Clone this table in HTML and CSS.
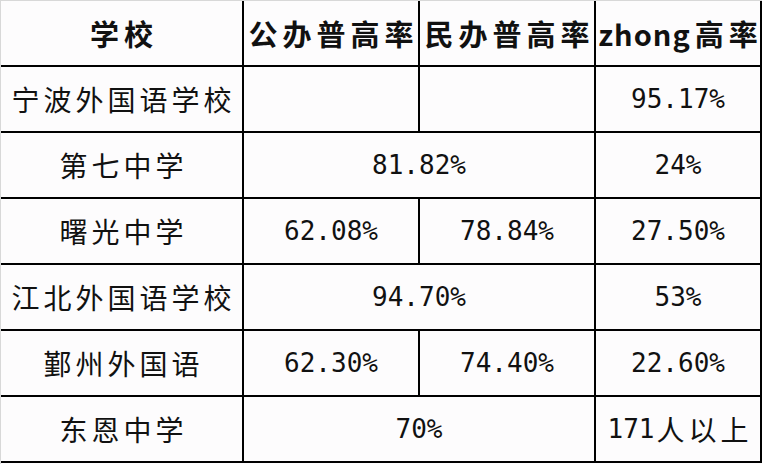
FILE: index.html
```html
<!DOCTYPE html>
<html lang="zh">
<head>
<meta charset="utf-8">
<title>学校普高率</title>
<link rel="stylesheet" href="styles.css">
</head>
<body>
<div class="sheet">
  <div class="cell head">学校</div>
  <div class="cell head">公办普高率</div>
  <div class="cell head">民办普高率</div>
  <div class="cell head"><span class="latin">zhong</span>高率</div>

  <div class="cell name">宁波外国语学校</div>
  <div class="cell"></div>
  <div class="cell"></div>
  <div class="cell num">95.17%</div>

  <div class="cell name">第七中学</div>
  <div class="cell num span2">81.82%</div>
  <div class="cell num">24%</div>

  <div class="cell name">曙光中学</div>
  <div class="cell num">62.08%</div>
  <div class="cell num">78.84%</div>
  <div class="cell num">27.50%</div>

  <div class="cell name">江北外国语学校</div>
  <div class="cell num span2">94.70%</div>
  <div class="cell num">53%</div>

  <div class="cell name">鄞州外国语</div>
  <div class="cell num">62.30%</div>
  <div class="cell num">74.40%</div>
  <div class="cell num">22.60%</div>

  <div class="cell name">东恩中学</div>
  <div class="cell num span2">70%</div>
  <div class="cell name"><span class="digits">171</span>人以上</div>
</div>
</body>
</html>
```

FILE: styles.css
```css
html, body {
  margin: 0;
  padding: 0;
  background: #fdfcfd;
}

.sheet {
  width: 762px;
  height: 464px;
  box-sizing: border-box;
  border-top: 1px solid #d8d8d8;
  border-left: 1px solid #d8d8d8;
  display: grid;
  grid-template-columns: 243px 176px 176px 166px;
  grid-template-rows: 66px repeat(6, 66px);
  background: #fdfcfd;
  color: #111;
}

.cell {
  box-sizing: border-box;
  border-right: 2px solid #000;
  border-bottom: 2px solid #000;
  display: flex;
  align-items: center;
  justify-content: center;
  white-space: nowrap;
  font-family: "Noto Sans CJK SC", "Noto Sans", sans-serif;
}

.head {
  font-size: 29px;
  font-weight: 700;
  letter-spacing: 5px;
  padding-left: 5px;
}

.head .latin {
  letter-spacing: 1px;
  margin-right: 4px;
}

.name {
  font-size: 28px;
  font-weight: 400;
  letter-spacing: 4px;
  padding-left: 4px;
}

.num {
  font-family: "DejaVu Sans Mono", "Liberation Mono", monospace;
  font-size: 26px;
  letter-spacing: 0;
}

.digits {
  font-family: "DejaVu Sans Mono", "Liberation Mono", monospace;
  font-size: 26px;
  letter-spacing: 0;
  margin-right: 2px;
}

.span2 {
  grid-column: span 2;
}
```
